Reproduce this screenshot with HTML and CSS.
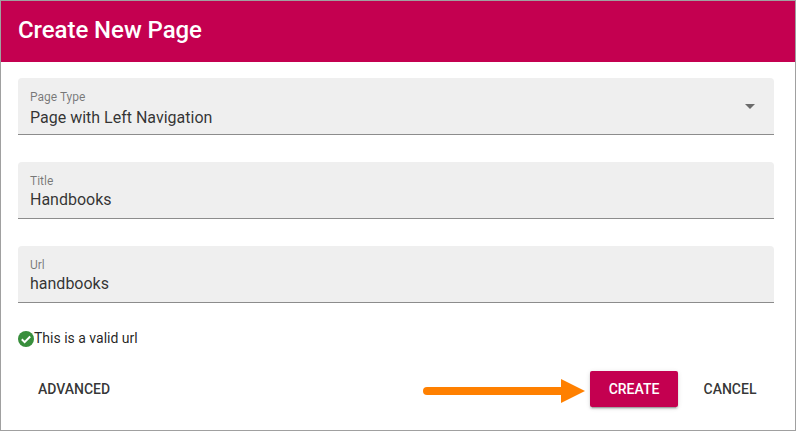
FILE: index.html
```html
<!DOCTYPE html>
<html lang="en">
<head>
<meta charset="utf-8">
<title>Create New Page</title>
<link rel="stylesheet" href="styles.css">
</head>
<body>
<main class="dialog">
  <header class="dialog-header"><h1>Create New Page</h1></header>
  <form class="form">
    <div class="field">
      <div class="field-body">
        <span class="label">Page Type</span>
        <span class="value value-select">Page with Left Navigation</span>
      </div>
      <svg class="caret" width="24" height="24" viewBox="0 0 24 24"><path d="M7 10l5 5 5-5z"/></svg>
    </div>
    <div class="field">
      <div class="field-body">
        <span class="label">Title</span>
        <span class="value">Handbooks</span>
      </div>
    </div>
    <div class="field">
      <div class="field-body">
        <span class="label">Url</span>
        <span class="value">handbooks</span>
      </div>
    </div>
    <div class="status">
      <svg width="16" height="16" viewBox="0 0 16 16"><circle cx="8" cy="8" r="8" fill="#388e3c"/><path d="M3.8 8.3l2.8 2.8 5.6-5.6" fill="none" stroke="#fff" stroke-width="2"/></svg>
      <span class="status-text">This is a valid url</span>
    </div>
  </form>
  <footer class="actions">
    <button class="btn advanced" type="button">Advanced</button>
    <svg class="arrow" width="162" height="24" viewBox="0 0 162 24"><path d="M4 12H140" stroke="#ff8000" stroke-width="8" stroke-linecap="round"/><path d="M138 0L162 12L138 24Z" fill="#ff8000"/></svg>
    <button class="btn create" type="button">Create</button>
    <button class="btn cancel" type="button">Cancel</button>
  </footer>
</main>
</body>
</html>
```
FILE: styles.css
```css
* { box-sizing: border-box; }
body { margin: 0; font-family: Roboto, sans-serif; color: rgba(0, 0, 0, .87); }
.dialog { width: 796px; height: 431px; border: 1px solid #a0a0a0; background: #fff; display: flex; flex-direction: column; }
.dialog-header { height: 61px; padding: 0 17px; background: #c40050; color: #fff; display: flex; align-items: center; }
h1 { margin: 0; padding-bottom: 4px; font-size: 24px; line-height: 32px; font-weight: 500; letter-spacing: -.06px; }
.form { padding: 16px 21px 0 17px; display: flex; flex-direction: column; gap: 27px; }
.field { height: 57px; padding: 10px 12px 0; background: #efefef; border-bottom: 1px solid #8c8c8c; border-radius: 4px 4px 0 0; display: flex; justify-content: space-between; }
.field-body { display: flex; flex-direction: column; }
.label { font-size: 12px; line-height: 18px; color: rgba(0, 0, 0, .5); }
.value { padding-top: 1px; font-size: 16px; line-height: 18px; color: rgba(0, 0, 0, .8); }
.value-select { padding-top: 3px; }
.caret { margin-top: 6px; fill: #6b6b6b; }
.status { height: 18px; display: flex; align-items: center; font-size: 14px; }
.status-text { padding-bottom: 2px; }
.actions { display: flex; align-items: center; padding: 23px 21px 0 17px; }
.btn { height: 36px; border: 0; padding: 0; border-radius: 2px; background: none; font: 500 14px Roboto, sans-serif; text-transform: uppercase; color: rgba(0, 0, 0, .8); }
.advanced { width: 112px; }
.arrow { margin-left: 293px; margin-top: 3px; }
.create { margin-left: 5px; width: 88px; background: #c40050; color: #fff; box-shadow: 0 3px 1px -2px rgba(0,0,0,.2), 0 2px 2px rgba(0,0,0,.14), 0 1px 5px rgba(0,0,0,.12); }
.cancel { margin-left: 8px; width: 88px; }
```
